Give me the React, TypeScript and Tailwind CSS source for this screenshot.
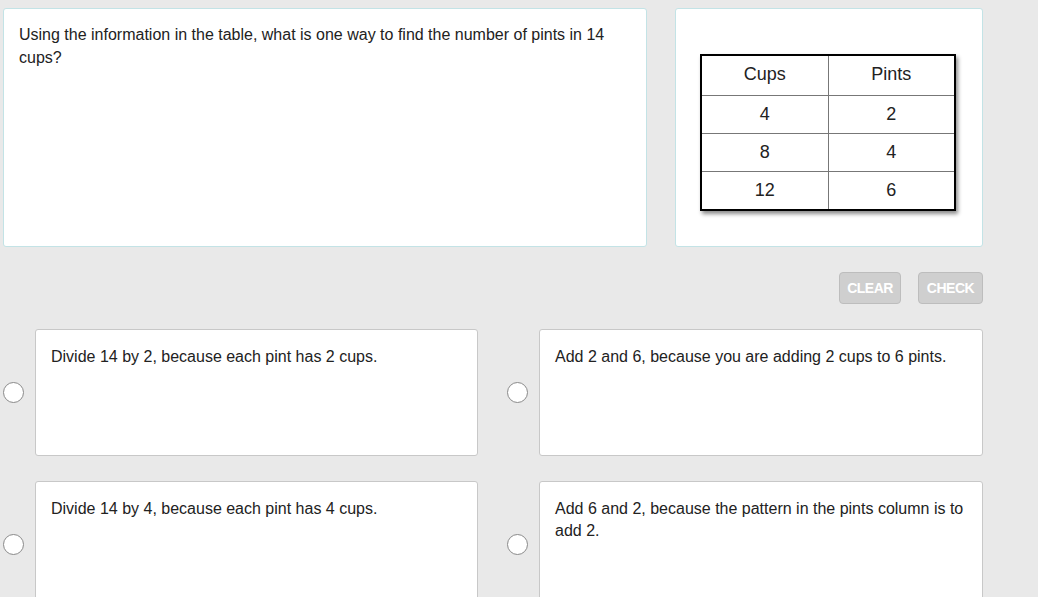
const answers = [
  "Divide 14 by 2, because each pint has 2 cups.",
  "Add 2 and 6, because you are adding 2 cups to 6 pints.",
  "Divide 14 by 4, because each pint has 4 cups.",
  "Add 6 and 2, because the pattern in the pints column is to add 2.",
];

const rows = [
  ["4", "2", "h-[38px]"],
  ["8", "4", "h-[38px]"],
  ["12", "6", "h-[39px]"],
];

export default function App() {
  return (
    <div className="w-[1038px] h-[597px] overflow-hidden bg-[#e9e9e9] font-['Liberation_Sans',Arial,sans-serif] text-[#222]">
      <div className="flex gap-[28px] pt-[8px] pl-[3px]">
        <div className="w-[644px] h-[239px] bg-white border border-[#c3e3e6] rounded-[3px] px-[15px] pt-[14px] text-[16px] leading-[23px]">
          Using the information in the table, what is one way to find the number of pints in 14 cups?
        </div>
        <div className="w-[308px] h-[239px] bg-white border border-[#c3e3e6] rounded-[3px] pl-[24px] pt-[45px]">
          <table className="w-[256px] border-collapse border-2 border-black text-[18px] text-center shadow-[2px_3px_4px_rgba(0,0,0,0.45)]">
            <tbody>
              <tr className="h-[40px]">
                <td className="border border-[#777] w-[127px] pb-[2px]">Cups</td>
                <td className="border border-[#777] pb-[2px]">Pints</td>
              </tr>
              {rows.map((r) => (
                <tr key={r[0]} className={r[2]}>
                  <td className="border border-[#777]">{r[0]}</td>
                  <td className="border border-[#777]">{r[1]}</td>
                </tr>
              ))}
            </tbody>
          </table>
        </div>
      </div>

      <div className="flex justify-end gap-[17px] w-[983px] mt-[25px]">
        <button className="w-[62px] h-[32px] rounded-[4px] bg-[#cfcfcf] border border-[#bdbdbd] text-white text-[14px] font-bold tracking-[-0.5px]">
          CLEAR
        </button>
        <button className="w-[65px] h-[32px] rounded-[4px] bg-[#cfcfcf] border border-[#bdbdbd] text-white text-[14px] font-bold tracking-[-0.5px]">
          CHECK
        </button>
      </div>

      <div className="grid grid-cols-[475px_476px] gap-x-[29px] gap-y-[25px] pl-[3px] mt-[25px]">
        {answers.map((a) => (
          <div key={a} className="flex items-center gap-[11px]">
            <span className="w-[21px] h-[21px] shrink-0 rounded-full bg-white border border-[#8a8a8a]" />
            <div className="flex-1 h-[127px] bg-white border border-[#c8c8c8] rounded-[3px] px-[15px] pt-[16px] text-[16px] leading-[22px]">
              {a}
            </div>
          </div>
        ))}
      </div>
    </div>
  );
}
